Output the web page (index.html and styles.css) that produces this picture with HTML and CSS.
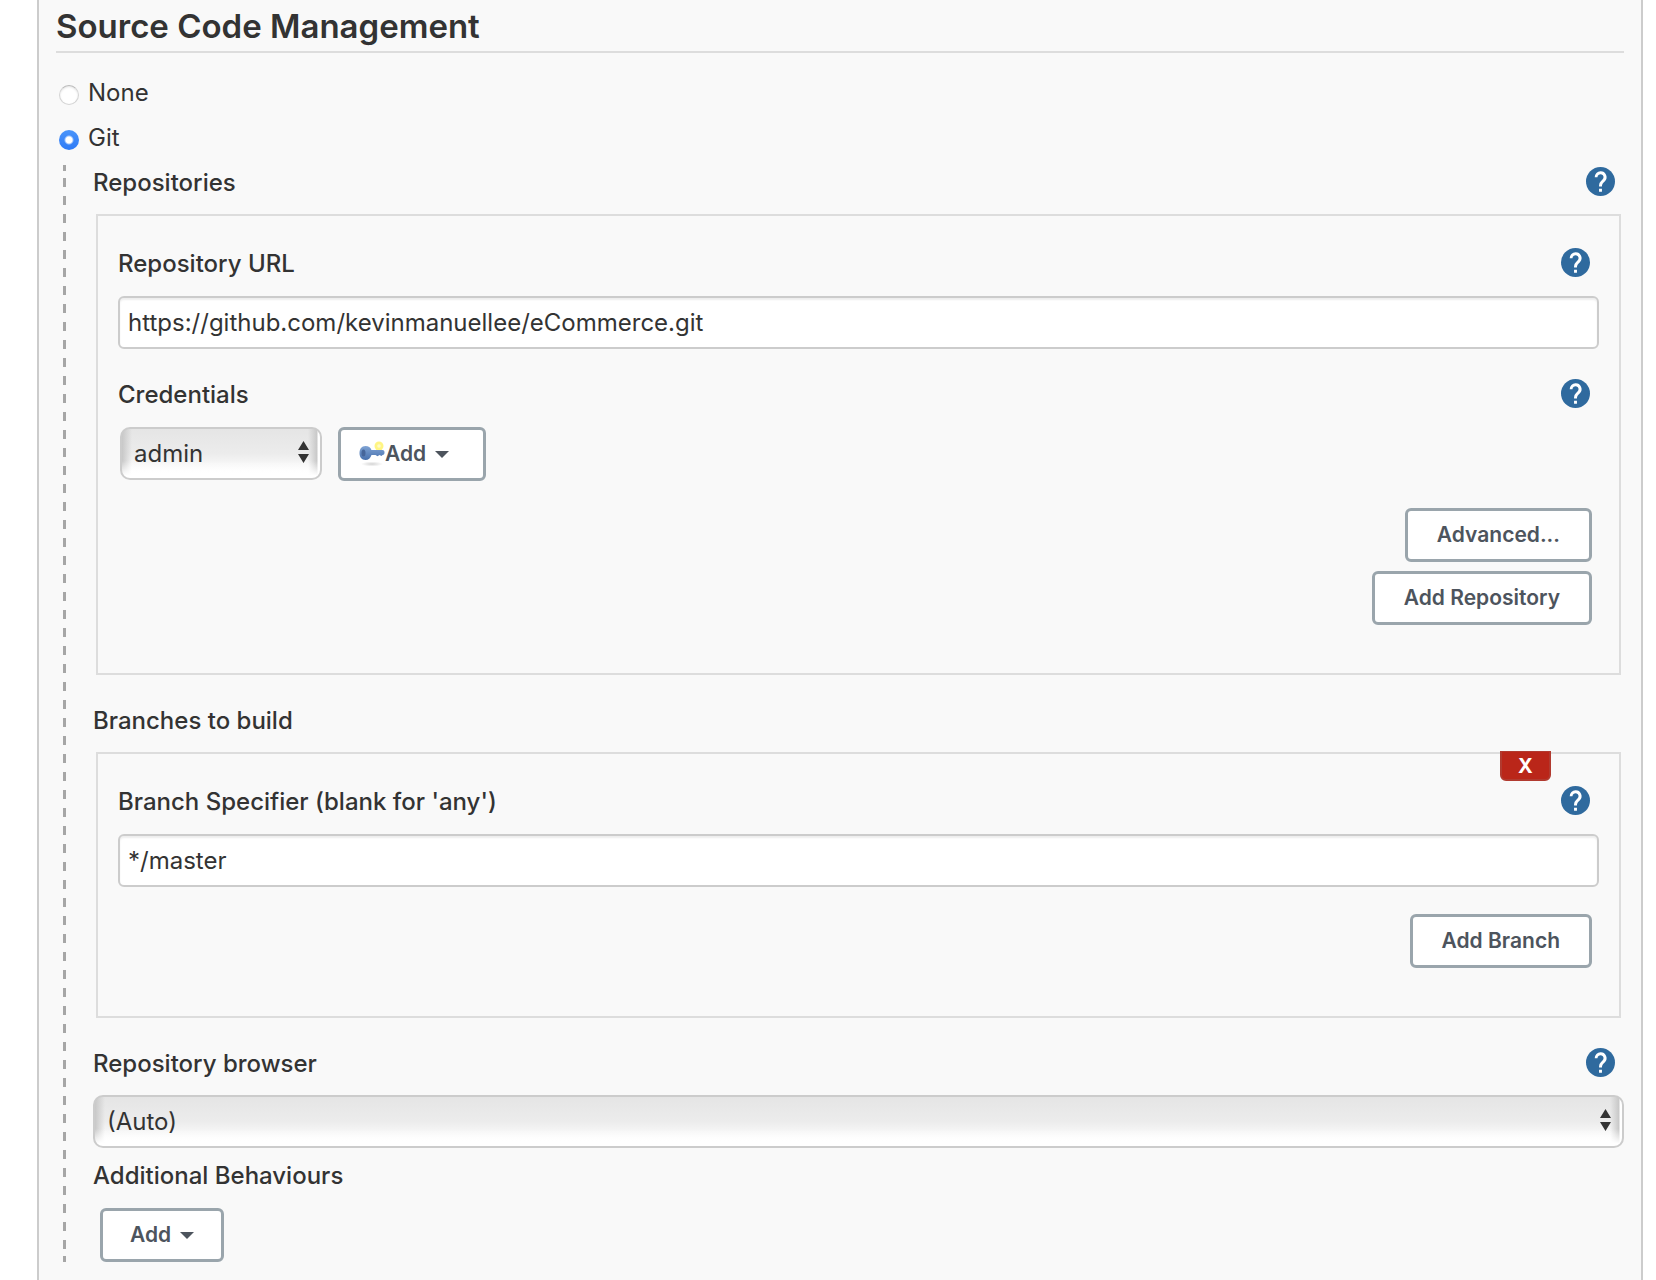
FILE: index.html
```html
<!DOCTYPE html>
<html lang="en">
<head>
<meta charset="utf-8">
<title>Source Code Management</title>
<link rel="stylesheet" href="styles.css">
</head>
<body>
<svg class="sprite" aria-hidden="true">
  <symbol id="help" viewBox="2 2 20 20">
    <circle cx="12" cy="12" r="10" fill="#2f6a9e"/>
    <path fill="#fff" d="M11 17h2v2h-2zM12 5a4 4 0 0 0-4 4h1.900a2.100 2.100 0 1 1 3.600 1.500l-1.250 1.260A4 4 0 0 0 11 14.600V15.500h2c0-1.500.45-2.100 1.170-2.830l.9-.92A4 4 0 0 0 12 5z"/>
  </symbol>
  <symbol id="updown" viewBox="0 0 11 22">
    <path fill="#333" d="M5.500 0 11 9H0zM0 13h11l-5.500 9z"/>
  </symbol>
  <symbol id="caret" viewBox="0 0 14 7">
    <path fill="#4d545d" d="M0 0h14L7 7z"/>
  </symbol>
</svg>
<main class="panel">
  <h1 class="title">Source Code Management</h1>
  <form class="scm">
    <label class="choice"><input class="radio" type="radio" name="scm" value="none"><span>None</span></label>
    <label class="choice"><input class="radio" type="radio" name="scm" value="git" checked><span>Git</span></label>

    <div class="nested">
      <section class="section">
        <div class="head head-outer">
          <h2 class="label">Repositories</h2>
          <button type="button" class="help" aria-label="Help for Repositories"><svg><use href="#help"/></svg></button>
        </div>
        <div class="box">
          <div class="head">
            <label class="label" for="url">Repository URL</label>
            <button type="button" class="help" aria-label="Help for Repository URL"><svg><use href="#help"/></svg></button>
          </div>
          <input class="text" id="url" type="text" value="https://github.com/kevinmanuellee/eCommerce.git">
          <div class="head head-next">
            <label class="label" for="cred">Credentials</label>
            <button type="button" class="help" aria-label="Help for Credentials"><svg><use href="#help"/></svg></button>
          </div>
          <div class="credentials">
            <span class="select select-small">
              <select id="cred"><option>admin</option></select>
              <svg class="arrows" aria-hidden="true"><use href="#updown"/></svg>
            </span>
            <button type="button" class="btn btn-key">
              <svg class="key" viewBox="0 0 26 26" aria-hidden="true">
                <defs>
                  <linearGradient id="blue" x1="0" y1="0" x2="0" y2="1">
                    <stop offset="0" stop-color="#7fa3d4"/>
                    <stop offset="1" stop-color="#4770ad"/>
                  </linearGradient>
                  <radialGradient id="shade">
                    <stop offset="0" stop-color="#d4d4d4"/>
                    <stop offset="1" stop-color="#fff"/>
                  </radialGradient>
                </defs>
                <ellipse cx="13" cy="23" rx="11" ry="2.500" fill="url(#shade)"/>
                <circle cx="20" cy="5" r="4.500" fill="#fff583"/>
                <circle cx="20" cy="5" r="1.800" fill="#fffbc4"/>
                <path fill="url(#blue)" d="M6.500 5c3 0 5 1.600 6 4h11c1.500 0 2 1 2 2.500s-.5 2.500-2 2.500l-1 1-2-1-2 1.200-2-1.200h-4c-1 3-3 5-6 5-4 0-6-3-6-7s2-7 6-7z"/>
                <ellipse cx="4.500" cy="12" rx="2" ry="3.500" fill="#45659a"/>
              </svg>
              <span>Add</span><svg class="caret" aria-hidden="true"><use href="#caret"/></svg>
            </button>
          </div>
          <div class="actions">
            <button type="button" class="btn">Advanced...</button>
            <button type="button" class="btn">Add Repository</button>
          </div>
        </div>
      </section>

      <section class="section">
        <div class="head head-outer">
          <h2 class="label">Branches to build</h2>
        </div>
        <div class="box">
          <button type="button" class="remove" aria-label="Remove branch">X</button>
          <div class="head">
            <label class="label" for="branch">Branch Specifier (blank for 'any')</label>
            <button type="button" class="help" aria-label="Help for Branch Specifier"><svg><use href="#help"/></svg></button>
          </div>
          <input class="text" id="branch" type="text" value="*/master">
          <div class="actions">
            <button type="button" class="btn">Add Branch</button>
          </div>
        </div>
      </section>

      <section class="section">
        <div class="head head-outer">
          <label class="label" for="browser">Repository browser</label>
          <button type="button" class="help" aria-label="Help for Repository browser"><svg><use href="#help"/></svg></button>
        </div>
        <span class="select">
          <select id="browser"><option>(Auto)</option></select>
          <svg class="arrows" aria-hidden="true"><use href="#updown"/></svg>
        </span>
      </section>

      <section class="behaviours">
        <div class="head"><h2 class="label">Additional Behaviours</h2></div>
        <button type="button" class="btn btn-menu"><span>Add</span><svg class="caret" aria-hidden="true"><use href="#caret"/></svg></button>
      </section>
    </div>
  </form>
</main>
</body>
</html>
```
FILE: styles.css
```css
* { box-sizing: border-box; }

body {
  margin: 0;
  background: #fff;
  color: #333;
  font: 24px/35px Inter, "Liberation Sans", sans-serif;
}

.sprite { position: absolute; width: 0; height: 0; }

.panel {
  min-height: 100vh;
  margin: 0 13px 0 37px;
  padding: 0 17px 18px;
  border: solid #ccc;
  border-width: 0 2px;
  background: #f9f9f9;
}

.title {
  margin: 0;
  padding-top: 2px;
  border-bottom: 2px solid #ddd;
  font-size: 33px;
  font-weight: 600;
  line-height: 49px;
}

.scm { padding-top: 17px; }

.choice {
  display: flex;
  gap: 9px;
  height: 45px;
  padding-left: 3px;
  line-height: 45px;
}

.radio {
  appearance: none;
  width: 20px;
  height: 20px;
  margin: 15px 0 0;
  border: 1px solid #d4d4d4;
  border-top-color: #bbb;
  border-radius: 50%;
  background: #fff;
  box-shadow: inset 0 1px 2px #e4e4e4;
}

.radio:checked {
  border: 0;
  background: radial-gradient(circle, #fff 3px, transparent 5px), linear-gradient(#4a94fa, #2f7bf6);
  box-shadow: none;
}

/* dashed rail that ties the Git options together */
.nested {
  margin: 5px 0 0 7px;
  padding-left: 30px;
  background:
    linear-gradient(#a6a6a6, #a6a6a6) 0 0 / 3px 6px no-repeat,
    linear-gradient(#a6a6a6, #a6a6a6) 0 100% / 3px 6px no-repeat,
    linear-gradient(#a6a6a6 4px, transparent 4px 13px, #a6a6a6 13px) 0 0 / 3px 18px repeat-y;
}

.section { margin-bottom: 28px; }
.section:nth-of-type(3) { margin-bottom: 10px; }

.head {
  display: flex;
  align-items: center;
  justify-content: space-between;
  height: 35px;
  margin-bottom: 15px;
  padding-right: 9px;
}

.head-outer { margin-bottom: 14px; }
.head-next { margin-top: 28px; }

.label { margin: 0; font-size: 24px; font-weight: 500; }

.help {
  width: 29px;
  height: 29px;
  margin-bottom: 3px;
  padding: 0;
  border: 0;
  background: none;
}

.help svg { display: block; width: 29px; height: 29px; }

.box {
  position: relative;
  margin: 0 3px;
  padding: 30px 20px 48px;
  border: 2px solid #ddd;
}

.text {
  display: block;
  width: 100%;
  height: 53px;
  padding: 0 8px;
  border: 2px solid #ccc;
  border-radius: 6px;
  background: #fff;
  box-shadow: inset 0 2px 2px #eee;
  color: #333;
  font: inherit;
}

.credentials { display: flex; gap: 16px; padding-left: 2px; }

.select { display: block; position: relative; }
.select-small { width: 202px; }

.select select {
  appearance: none;
  display: block;
  width: 100%;
  height: 53px;
  padding: 0 36px 0 12px;
  border: 2px solid #ccc;
  border-radius: 10px;
  background:
    linear-gradient(transparent 65%, #fff 95%),
    linear-gradient(to right, #c8c8c8, #c8c8c800) 0 0 / 10px 100% no-repeat,
    linear-gradient(to left, #fff 2px, #c8c8c8 3px, #c8c8c800 12px) 100% 0 / 12px 100% no-repeat,
    linear-gradient(#e5e5e5, #ececec 50%, #fff 90%);
  color: #333;
  font: inherit;
}

.arrows {
  position: absolute;
  top: 14px;
  right: 13px;
  width: 11px;
  height: 22px;
  pointer-events: none;
}

.btn {
  display: flex;
  align-items: center;
  height: 54px;
  padding: 0 29px;
  border: 3px solid #9aa5ac;
  border-radius: 6px;
  background: #fff;
  color: #4d545d;
  font: 600 21px/28px Inter, "Liberation Sans", sans-serif;
}

.btn-key { width: 148px; padding: 0 18px; }
.btn-menu { margin-left: 7px; padding: 0 27px; }

.key { width: 26px; height: 26px; }
.caret { width: 14px; height: 7px; margin-left: 9px; }

.actions {
  display: flex;
  flex-direction: column;
  align-items: flex-end;
  gap: 9px;
  margin: 27px 7px 0 0;
}

.remove {
  position: absolute;
  top: -3px;
  right: 68px;
  width: 51px;
  height: 30px;
  padding: 1px 0 0;
  border: 2px solid #b13a2f;
  border-top-width: 1px;
  border-radius: 0 0 6px 6px;
  background: #ba2619;
  color: #fff;
  font: 700 20px/26px Inter, "Liberation Sans", sans-serif;
}
```
